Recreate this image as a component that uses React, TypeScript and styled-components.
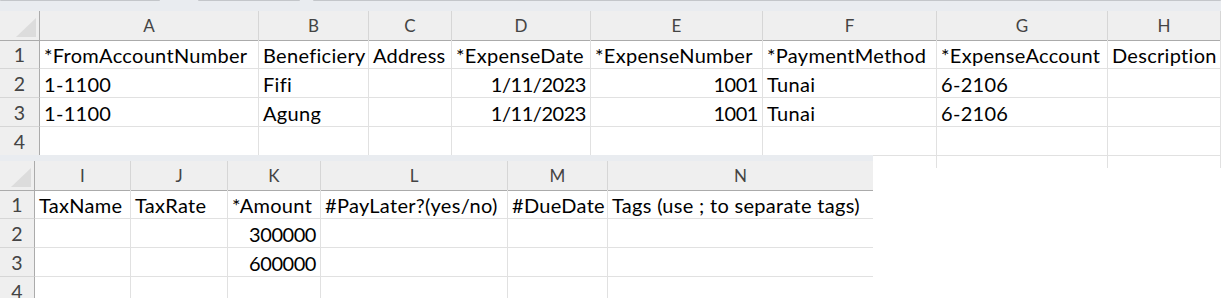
import React from "react";
import styled, { createGlobalStyle } from "styled-components";

type Align = "left" | "right";

interface Cell {
  text?: string;
  align?: Align;
}

interface SheetSpec {
  letters: string[];
  widths: number[]; // row-number column first, then one per lettered column
  rows: Cell[][];
  tail?: boolean; // an extra unnumbered row, cut off by the frame
}

const t = (text: string): Cell => ({ text });
const n = (text: string): Cell => ({ text, align: "right" });
const empty: Cell = {};

const expenses: SheetSpec = {
  letters: ["A", "B", "C", "D", "E", "F", "G", "H"],
  widths: [40, 219, 110, 83, 139, 172, 174, 171, 113],
  rows: [
    [
      t("*FromAccountNumber"),
      t("Beneficiery"),
      t("Address"),
      t("*ExpenseDate"),
      t("*ExpenseNumber"),
      t("*PaymentMethod"),
      t("*ExpenseAccount"),
      t("Description"),
    ],
    [t("1-1100"), t("Fifi"), empty, n("1/11/2023"), n("1001"), t("Tunai"), t("6-2106"), empty],
    [t("1-1100"), t("Agung"), empty, n("1/11/2023"), n("1001"), t("Tunai"), t("6-2106"), empty],
    [],
  ],
  tail: true,
};

const taxes: SheetSpec = {
  letters: ["I", "J", "K", "L", "M", "N"],
  widths: [35, 96, 97, 93, 187, 100, 266],
  rows: [
    [
      t("TaxName"),
      t("TaxRate"),
      t("*Amount"),
      t("#PayLater?(yes/no)"),
      t("#DueDate"),
      t("Tags (use ; to separate tags)"),
    ],
    [empty, empty, n("300000"), empty, empty, empty],
    [empty, empty, n("600000"), empty, empty, empty],
    [],
  ],
};

const GlobalStyle = createGlobalStyle`
  html, body {
    margin: 0;
    padding: 0;
    background: #ffffff;
  }
  body {
    width: 1221px;
    height: 298px;
    overflow: hidden;
    font-family: Lato, "Liberation Sans", sans-serif;
    color: #000;
  }
`;

const Page = styled.div`
  display: flex;
  flex-direction: column;
  align-items: flex-start;
`;

const SheetFrame = styled.div<{ $width: number; $height: number; $overlap?: number }>`
  position: relative;
  width: ${(p) => p.$width}px;
  height: ${(p) => p.$height}px;
  margin-top: ${(p) => (p.$overlap ? -p.$overlap : 0)}px;
  overflow: hidden;
  background: #ffffff;
  display: flex;
  flex-direction: column;
`;

const Ribbon = styled.div<{ $h: number }>`
  height: ${(p) => p.$h}px;
  flex: none;
  background: #e9ecf0;
  display: flex;
  align-items: flex-start;
`;

// bottom edges of the name box / formula bar peeking in above the grid
const BoxEdge = styled.div<{ $w: number; $gap: number }>`
  height: 1px;
  width: ${(p) => p.$w}px;
  margin-left: ${(p) => p.$gap}px;
  background: #c3c6ca;
  border-radius: 0 0 2px 2px;
`;

const Row = styled.div<{ $cols: string }>`
  display: grid;
  grid-template-columns: ${(p) => p.$cols};
  height: 29px;
  flex: none;
`;

const Corner = styled.div`
  position: relative;
  background: #efefef;
  border-right: 1px solid #ababab;
  border-bottom: 1px solid #ababab;

  &::after {
    content: "";
    position: absolute;
    right: 3px;
    bottom: 3px;
    width: 20px;
    height: 19px;
    background: #dcdcdc;
    clip-path: polygon(100% 0, 100% 100%, 0 100%);
  }
`;

const ColHead = styled.div`
  background: #efefef;
  border-right: 1px solid #d6d6d6;
  border-bottom: 1px solid #ababab;
  color: #444;
  font-size: 17px;
  line-height: 28px;
  padding-top: 1px;
  text-align: center;
  box-sizing: border-box;
`;

const RowHead = styled.div`
  background: #efefef;
  border-right: 1px solid #ababab;
  border-bottom: 1px solid #d6d6d6;
  color: #444;
  font-size: 19.5px;
  line-height: 28px;
  padding-top: 1px;
  text-align: center;
  box-sizing: border-box;
  height: 29px;
`;

// numbers sit right-aligned and a touch tighter, like the sheet's own digits
const DataCell = styled.div<{ $align: Align }>`
  border-right: 1px solid #e1e1e1;
  border-bottom: 1px solid #e1e1e1;
  font-size: 20px;
  letter-spacing: ${(p) => (p.$align === "right" ? -0.45 : 0.3)}px;
  line-height: 28px;
  padding: 1px 4px 0 4px;
  text-align: ${(p) => p.$align};
  white-space: nowrap;
  overflow: hidden;
  box-sizing: border-box;
  height: 29px;
`;

interface SheetProps {
  spec: SheetSpec;
  width: number;
  height: number;
  ribbon: number;
  overlap?: number;
  edges?: { w: number; gap: number }[];
}

const Sheet: React.FC<SheetProps> = ({ spec, width, height, ribbon, overlap, edges }) => {
  const cols = spec.widths.map((w) => `${w}px`).join(" ");

  return (
    <SheetFrame $width={width} $height={height} $overlap={overlap}>
      <Ribbon $h={ribbon}>
        {edges?.map((e, i) => (
          <BoxEdge key={i} $w={e.w} $gap={e.gap} />
        ))}
      </Ribbon>
      <Row $cols={cols}>
        <Corner />
        {spec.letters.map((l) => (
          <ColHead key={l}>{l}</ColHead>
        ))}
      </Row>
      {spec.rows.map((cells, r) => (
        <Row key={r} $cols={cols}>
          <RowHead>{r + 1}</RowHead>
          {spec.letters.map((l, c) => {
            const cell = cells[c] ?? empty;
            return (
              <DataCell key={l} $align={cell.align ?? "left"}>
                {cell.text}
              </DataCell>
            );
          })}
        </Row>
      ))}
      {spec.tail && (
        <Row $cols={cols}>
          <RowHead />
          {spec.letters.map((l) => (
            <DataCell key={l} $align="left" />
          ))}
        </Row>
      )}
    </SheetFrame>
  );
};

const App: React.FC = () => (
  <Page>
    <GlobalStyle />
    <Sheet
      spec={expenses}
      width={1221}
      height={168}
      ribbon={11}
      edges={[
        { w: 160, gap: 0 },
        { w: 102, gap: 38 },
        { w: 908, gap: 13 },
      ]}
    />
    <Sheet spec={taxes} width={873} height={143} ribbon={6} overlap={13} />
  </Page>
);

export default App;
